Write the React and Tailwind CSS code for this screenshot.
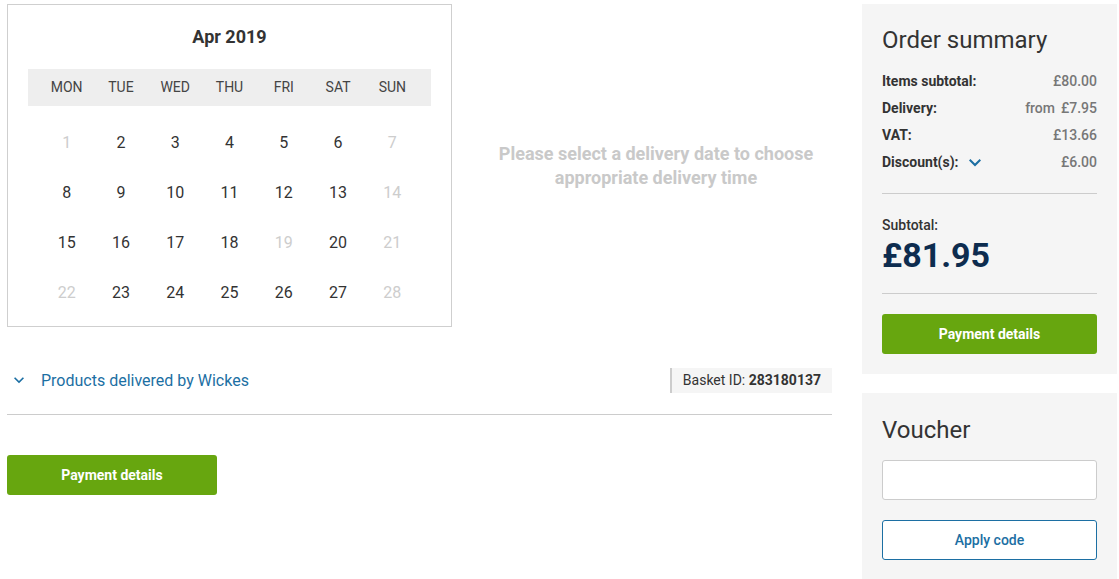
import React from "react";

const DAYS = ["MON", "TUE", "WED", "THU", "FRI", "SAT", "SUN"];

// second item true = greyed out
const WEEKS = [
  [[1, true], [2], [3], [4], [5], [6], [7, true]],
  [[8], [9], [10], [11], [12], [13], [14, true]],
  [[15], [16], [17], [18], [19, true], [20], [21, true]],
  [[22, true], [23], [24], [25], [26], [27], [28, true]],
];

const SUMMARY = [
  { label: "Items subtotal:", value: "£80.00" },
  { label: "Delivery:", value: "£7.95", prefix: "from" },
  { label: "VAT:", value: "£13.66" },
  { label: "Discount(s):", value: "£6.00", toggle: true },
];

function Chevron({ className }) {
  return (
    <svg viewBox="0 0 12 8" className={className} fill="currentColor">
      <path d="M1.4 0 6 4.6 10.6 0 12 1.4 6 7.4 0 1.4Z" />
    </svg>
  );
}

function Calendar() {
  return (
    <div className="w-[445px] h-[323px] border border-[#cfcfcf] bg-white pt-[20px]">
      <h2 className="text-center text-[18px] font-bold text-[#333] leading-[24px]">
        Apr 2019
      </h2>

      <div className="mx-[20px] mt-[20px] h-[37px] bg-[#eeeeee] flex justify-center items-center">
        <div className="grid grid-cols-7 w-[380px]">
          {DAYS.map((d) => (
            <span key={d} className="text-center text-[14px] text-[#444]">
              {d}
            </span>
          ))}
        </div>
      </div>

      <div className="grid grid-cols-7 w-[380px] mx-auto mt-[12px]">
        {WEEKS.flat().map(([n, off]) => (
          <span
            key={n}
            className={
              "h-[50px] flex items-center justify-center text-[16px] " +
              (off ? "text-[#cdcdcd]" : "text-[#333]")
            }
          >
            {n}
          </span>
        ))}
      </div>
    </div>
  );
}

export default function App() {
  return (
    <div
      className="w-[1119px] h-[579px] bg-white overflow-hidden flex"
      style={{ fontFamily: "Roboto, 'Liberation Sans', sans-serif" }}
    >
      {/* Left */}
      <div className="w-[825px] ml-[7px] pt-[4px]">
        <div className="flex">
          <Calendar />
          <div className="flex-1 flex items-start justify-center pt-[138px] -mr-[28px]">
            <p className="text-center text-[18px] font-bold leading-[24px] text-[#c9c9c9]">
              Please select a delivery date to choose
              <br />
              appropriate delivery time
            </p>
          </div>
        </div>

        <div className="mt-[41px] flex items-center justify-between border-b border-[#cccccc] pb-[21px]">
          <div className="flex items-center gap-[17px] pl-[7px] text-[#1c6fa3]">
            <Chevron className="w-[10px] h-[7px]" />
            <span className="text-[16px]">Products delivered by Wickes</span>
          </div>
          <div className="h-[25px] flex items-center bg-[#f5f5f5] border-l-2 border-[#cccccc] px-[11px] text-[14px] text-[#333]">
            Basket ID:&nbsp;<span className="font-bold">283180137</span>
          </div>
        </div>

        <button className="mt-[40px] w-[210px] h-[40px] rounded-[3px] bg-[#67a60f] text-white text-[14px] font-bold">
          Payment details
        </button>
      </div>

      {/* Right */}
      <div className="ml-[30px] w-[255px] pt-[4px] flex flex-col gap-[19px]">
        <div className="bg-[#f5f5f5] px-[20px] pt-[22px] pb-[20px]">
          <h2 className="text-[24px] text-[#333] leading-[28px]">Order summary</h2>
          <div className="mt-[14px] flex flex-col">
            {SUMMARY.map((r) => (
              <div
                key={r.label}
                className="h-[27px] flex items-center justify-between text-[14px]"
              >
                <span className="flex items-center gap-[10px] font-bold text-[#333]">
                  {r.label}
                  {r.toggle && (
                    <Chevron className="w-[12px] h-[8px] text-[#1c6fa3]" />
                  )}
                </span>
                <span className="font-medium text-[#777]">
                  {r.prefix && <span className="mr-[6px]">{r.prefix}</span>}
                  {r.value}
                </span>
              </div>
            ))}
          </div>
          <div className="mt-[17px] border-t border-[#cccccc] pt-[23px]">
            <div className="text-[14px] font-medium text-[#333] leading-[16px]">Subtotal:</div>
            <div className="mt-[2px] text-[34px] font-bold text-[#0d2c4f] leading-[40px]">£81.95</div>
          </div>
          <div className="mt-[18px] border-t border-[#cccccc] pt-[20px]">
            <button className="w-full h-[40px] rounded-[3px] bg-[#67a60f] text-white text-[14px] font-bold">
              Payment details
            </button>
          </div>
        </div>

        <div className="bg-[#f5f5f5] px-[20px] pt-[23px] pb-[20px] flex-1">
          <h2 className="text-[24px] text-[#333] leading-[28px]">Voucher</h2>
          <input
            className="mt-[16px] w-full h-[40px] bg-white border border-[#cccccc] rounded-[3px] px-3 outline-none"
            aria-label="Voucher code"
          />
          <button className="mt-[20px] w-full h-[40px] bg-white border border-[#1c6fa3] rounded-[3px] text-[#1c6fa3] text-[14px] font-medium">
            Apply code
          </button>
        </div>
      </div>
    </div>
  );
}
